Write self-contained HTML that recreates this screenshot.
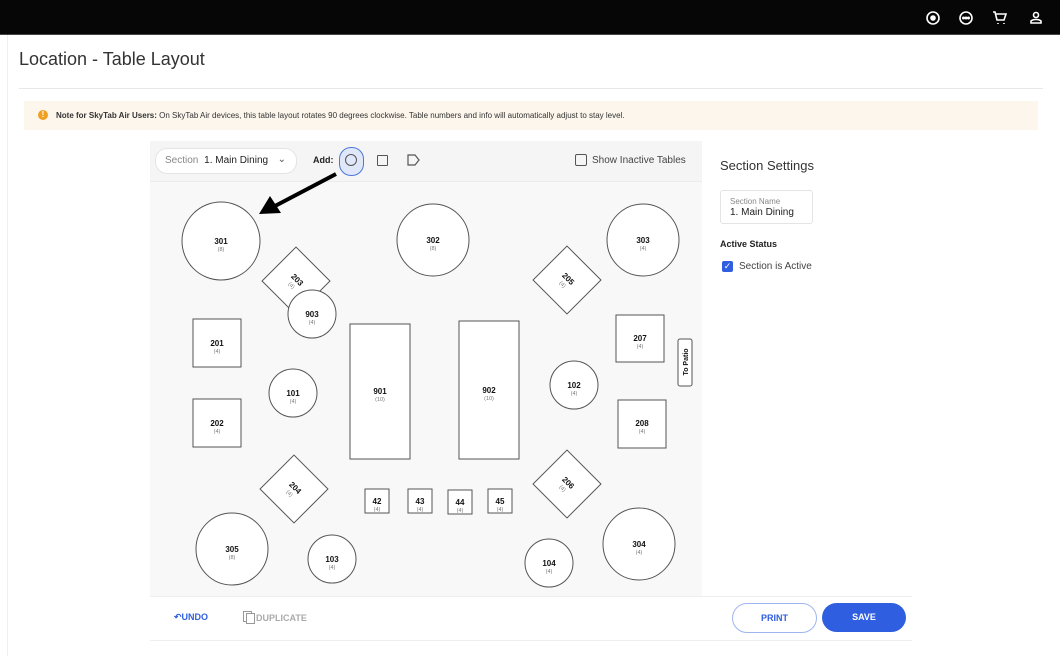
<!DOCTYPE html>
<html><head><meta charset="utf-8"><style>
body{margin:0;width:1060px;height:656px;background:#fff;font-family:"Liberation Sans",sans-serif;position:relative;overflow:hidden;color:#222}
.a{position:absolute}
</style></head><body>
<div class="a" style="left:0;top:0;width:1060px;height:34px;background:#060606;border-bottom:1px solid #444"></div>
<svg class="a" style="left:915px;top:6px" width="140" height="24" viewBox="0 0 140 24" fill="none" stroke="#fff" stroke-width="1.6">
<circle cx="18" cy="12" r="6"/><circle cx="18" cy="12" r="2" fill="#fff"/>
<circle cx="51" cy="12" r="6"/><circle cx="48.5" cy="12" r=".7" fill="#fff"/><circle cx="51" cy="12" r=".7" fill="#fff"/><circle cx="53.5" cy="12" r=".7" fill="#fff"/>
<path d="M78 6h2l2 8h7l2-6h-10M83 17v1M89 17v1"/>
<circle cx="121" cy="9" r="2.5"/><path d="M116 17h10v-2c-2-2-8-2-10 0z"/>
</svg>
<div class="a" style="left:0;top:35px;width:7px;height:621px;border-right:1px solid #eee"></div>
<div class="a" style="left:19px;top:49px;font-size:18px;color:#333">Location - Table Layout</div>
<div class="a" style="left:19px;top:88px;width:1024px;height:1px;background:#e8e8e8"></div>
<div class="a" style="left:24px;top:101px;width:1014px;height:29px;background:#fdf6ec"></div>
<div class="a" style="left:38px;top:110px;width:10px;height:10px;border-radius:50%;background:#f0a020;color:#fff;font-size:8px;text-align:center;line-height:10px;font-weight:bold">!</div>
<div class="a" style="left:56px;top:111px;font-size:8px;color:#333"><b>Note for SkyTab Air Users:</b> On SkyTab Air devices, this table layout rotates 90 degrees clockwise. Table numbers and info will automatically adjust to stay level.</div>
<div class="a" style="left:150px;top:141px;width:552px;height:455px;background:#f8f8f8"></div>
<div class="a" style="left:150px;top:141px;width:552px;height:40px;background:#f5f5f5;border-bottom:1px solid #ececec"></div>
<div class="a" style="left:155px;top:148px;width:140px;height:24px;background:#fff;border:1px solid #e4e4e4;border-radius:12px;font-size:10px;line-height:24px"><span style="color:#888;margin-left:9px">Section</span> <span style="margin-left:3px">1. Main Dining</span><span style="position:absolute;right:10px;top:-1px;color:#555">⌄</span></div>
<div class="a" style="left:313px;top:155px;font-size:9px;font-weight:bold">Add:</div>
<div class="a" style="left:339px;top:147px;width:23px;height:27px;border:1px solid #4d77d8;border-radius:12px;background:#dfe7f8"></div>
<div class="a" style="left:345px;top:154px;width:10px;height:10px;border:1px solid #555;border-radius:50%"></div>
<div class="a" style="left:377px;top:155px;width:9px;height:9px;border:1px solid #555;border-radius:1px"></div>
<svg class="a" style="left:407px;top:154px" width="14" height="12"><path d="M1 1h7l4 5-4 5h-7z" fill="none" stroke="#555" stroke-width="1.2"/></svg>
<div class="a" style="left:575px;top:154px;width:10px;height:10px;border:1px solid #555;border-radius:2px"></div>
<div class="a" style="left:592px;top:155px;font-size:10px;color:#444">Show Inactive Tables</div>
<svg class="a" style="left:150px;top:181px" width="552" height="415" viewBox="150 181 552 415" font-family="Liberation Sans,sans-serif" text-anchor="middle">
<g fill="#fff" stroke="#555" stroke-width="1">
<circle cx="221" cy="241" r="39"/><circle cx="433" cy="240" r="36"/><circle cx="643" cy="240" r="36"/>
<circle cx="232" cy="549" r="36"/><circle cx="639" cy="544" r="36"/>
<rect x="193" y="319" width="48" height="48"/><rect x="193" y="399" width="48" height="48"/>
<rect x="616" y="315" width="48" height="47"/><rect x="618" y="400" width="48" height="48"/>
<rect x="350" y="324" width="60" height="135"/><rect x="459" y="321" width="60" height="138"/>
<rect x="365" y="489" width="24" height="24"/><rect x="408" y="489" width="24" height="24"/><rect x="448" y="490" width="24" height="24"/><rect x="488" y="489" width="24" height="24"/>
<rect x="272" y="257" width="48" height="48" transform="rotate(45 296 281)"/>
<rect x="543" y="256" width="48" height="48" transform="rotate(45 567 280)"/>
<rect x="270" y="465" width="48" height="48" transform="rotate(45 294 489)"/>
<rect x="543" y="460" width="48" height="48" transform="rotate(45 567 484)"/>
<circle cx="312" cy="314" r="24"/><circle cx="293" cy="393" r="24"/><circle cx="574" cy="385" r="24"/><circle cx="332" cy="559" r="24"/><circle cx="549" cy="563" r="24"/>
<rect x="678" y="339" width="14" height="47" rx="2"/>
</g>
<g font-size="8" font-weight="bold" fill="#111">
<text x="221" y="244">301</text><text x="433" y="243">302</text><text x="643" y="243">303</text><text x="232" y="552">305</text><text x="639" y="547">304</text>
<text x="217" y="346">201</text><text x="217" y="426">202</text><text x="640" y="341">207</text><text x="642" y="426">208</text>
<text x="380" y="394">901</text><text x="489" y="393">902</text>
<text x="377" y="504">42</text><text x="420" y="504">43</text><text x="460" y="505">44</text><text x="500" y="504">45</text>
<text x="312" y="317">903</text><text x="293" y="396">101</text><text x="574" y="388">102</text><text x="332" y="562">103</text><text x="549" y="566">104</text>
<text transform="rotate(45 296 281)" x="296" y="282">203</text><text transform="rotate(45 567 280)" x="567" y="281">205</text>
<text transform="rotate(45 294 489)" x="294" y="490">204</text><text transform="rotate(45 567 484)" x="567" y="485">206</text>
<text transform="rotate(-90 685 362)" x="685" y="365" font-size="7">To Patio</text>
</g>
<g font-size="5.5" fill="#777">
<text x="221" y="251">(8)</text><text x="433" y="250">(8)</text><text x="643" y="250">(4)</text><text x="232" y="559">(8)</text><text x="639" y="554">(4)</text>
<text x="217" y="353">(4)</text><text x="217" y="433">(4)</text><text x="640" y="348">(4)</text><text x="642" y="433">(4)</text>
<text x="380" y="401">(10)</text><text x="489" y="400">(10)</text>
<text x="377" y="511">(4)</text><text x="420" y="511">(4)</text><text x="460" y="512">(4)</text><text x="500" y="511">(4)</text>
<text x="312" y="324">(4)</text><text x="293" y="403">(4)</text><text x="574" y="395">(4)</text><text x="332" y="569">(4)</text><text x="549" y="573">(4)</text>
<text transform="rotate(45 296 281)" x="296" y="289">(4)</text><text transform="rotate(45 567 280)" x="567" y="288">(4)</text>
<text transform="rotate(45 294 489)" x="294" y="497">(4)</text><text transform="rotate(45 567 484)" x="567" y="492">(4)</text>
</g>
</svg>
<svg class="a" style="left:250px;top:165px" width="95" height="55" viewBox="250 165 95 55">
<path d="M336 174L275 206" stroke="#000" stroke-width="4"/>
<path d="M259 214L270 196L281 213z" fill="#000"/>
</svg>
<div class="a" style="left:720px;top:158px;font-size:13px;color:#333">Section Settings</div>
<div class="a" style="left:720px;top:190px;width:91px;height:32px;border:1px solid #e4e4e4;border-radius:3px"></div>
<div class="a" style="left:730px;top:197px;font-size:8px;color:#888">Section Name</div>
<div class="a" style="left:730px;top:207px;font-size:10px;color:#222">1. Main Dining</div>
<div class="a" style="left:720px;top:239px;font-size:9px;font-weight:bold;color:#222">Active Status</div>
<div class="a" style="left:722px;top:261px;width:11px;height:11px;background:#2f5fe0;border-radius:2px;color:#fff;font-size:9px;line-height:11px;text-align:center">✓</div>
<div class="a" style="left:739px;top:261px;font-size:10px;color:#444">Section is Active</div>
<div class="a" style="left:150px;top:596px;width:762px;height:43px;border-top:1px solid #eee;border-bottom:1px solid #eee"></div>
<div class="a" style="left:174px;top:612px;font-size:9px;font-weight:bold;color:#2f5fe0">↶UNDO</div>
<div class="a" style="left:243px;top:611px;width:7px;height:9px;border:1px solid #999"></div>
<div class="a" style="left:246px;top:613px;width:7px;height:9px;border:1px solid #999;background:#fff"></div>
<div class="a" style="left:256px;top:613px;font-size:9px;font-weight:bold;color:#aaa">DUPLICATE</div>
<div class="a" style="left:732px;top:603px;width:83px;height:28px;border:1px solid #9fb5ef;border-radius:15px;text-align:center;line-height:28px;font-size:9px;font-weight:bold;color:#2f5fe0">PRINT</div>
<div class="a" style="left:822px;top:603px;width:84px;height:29px;background:#2f5fe0;border-radius:15px;text-align:center;line-height:29px;font-size:9px;font-weight:bold;color:#fff">SAVE</div>
</body></html>
